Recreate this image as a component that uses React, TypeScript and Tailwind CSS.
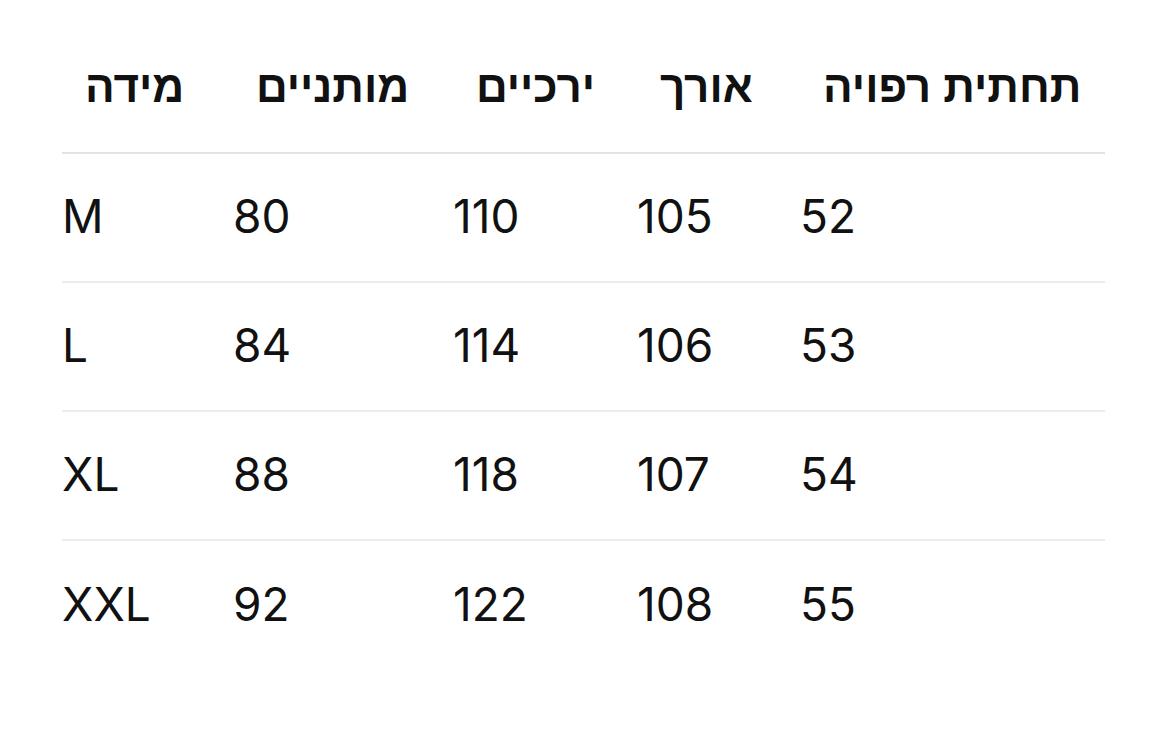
import React from "react";

const rows = [
  ["M", "80", "110", "105", "52"],
  ["L", "84", "114", "106", "53"],
  ["XL", "88", "118", "107", "54"],
  ["XXL", "92", "122", "108", "55"],
];
const headers = ["מידה", "מותניים", "ירכיים", "אורך", "תחתית רפויה"];

export default function App() {
  return (
    <div className="w-[1170px] h-[735px] bg-white pt-[23px] pl-[62px]" style={{ fontFamily: 'Inter, "Liberation Sans", sans-serif' }}>
      <div className="w-[1043px]">
        <div className="grid grid-cols-[171px_220px_184px_163px_305px] h-[131px] items-center border-b-2 border-[#e3e3e3]">
          {headers.map((h) => (
            <div key={h} className="pl-[23px] text-[44px] font-bold text-[#111] leading-none -mt-[2px]" style={{ fontFamily: '"Liberation Sans", Arial, sans-serif' }}>
              <span dir="rtl">{h}</span>
            </div>
          ))}
        </div>
        {rows.map((r, i) => (
          <div
            key={r[0]}
            className={`grid grid-cols-[171px_220px_184px_163px_305px] h-[129px] items-center ${i < rows.length - 1 ? "border-b-2 border-[#ececec]" : ""}`}
          >
            {r.map((c, j) => (
              <div key={j} className="text-[46px] text-[#111] leading-none -mt-[4px]">
                {c}
              </div>
            ))}
          </div>
        ))}
      </div>
    </div>
  );
}
